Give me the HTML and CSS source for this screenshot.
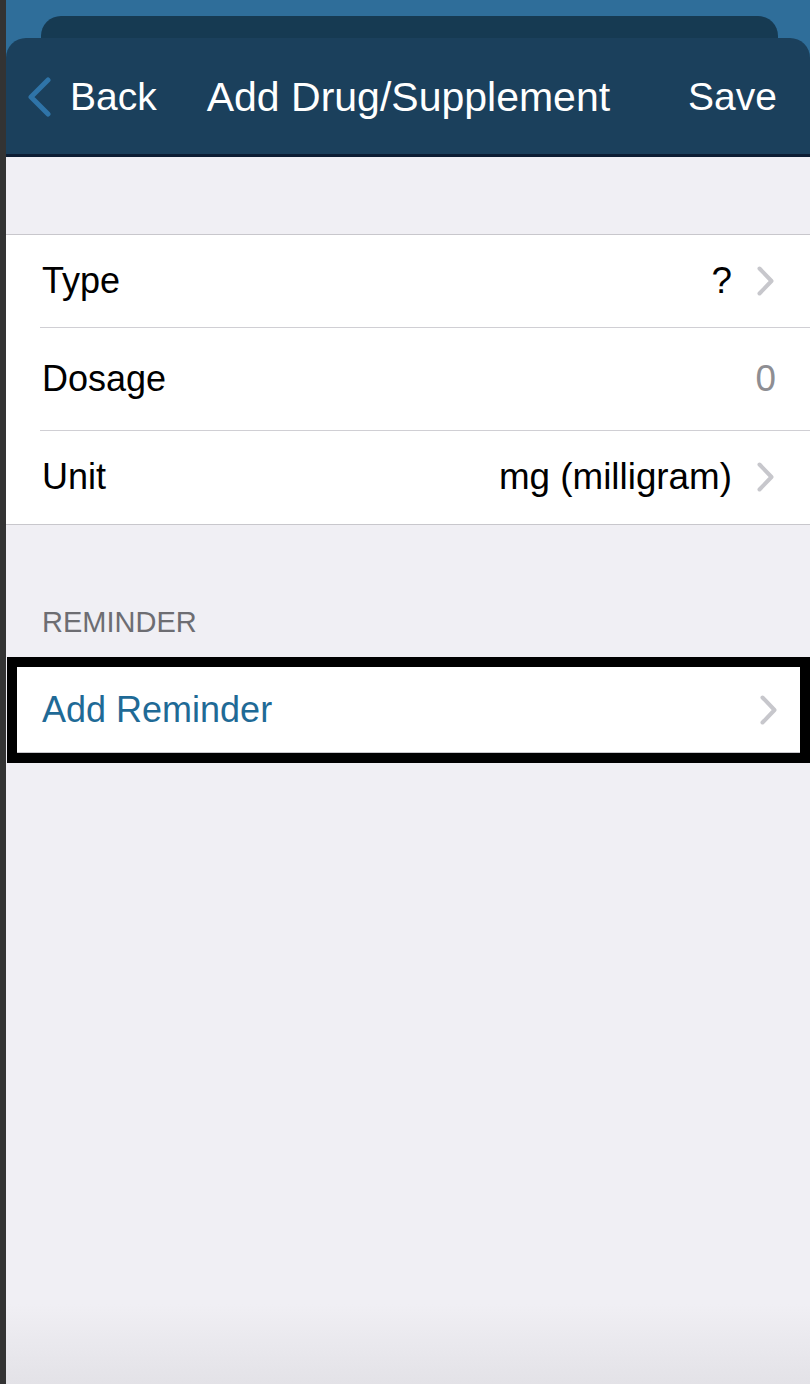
FILE: index.html
```html
<!DOCTYPE html>
<html lang="en">
<head>
  <meta charset="UTF-8" />
  <meta name="viewport" content="width=device-width, initial-scale=1.0" />
  <title>Add Drug/Supplement</title>
  <link rel="stylesheet" href="styles.css">
</head>
<body>
  <div class="edge"></div>
  <div class="screen">
    <header class="header">
      <div class="back-sheet"></div>
      <nav class="navbar">
        <a class="nav-back">
          <svg class="back-icon" width="26" height="40" viewBox="0 0 26 40">
            <polyline points="22,3 5,20 22,37" fill="none" stroke="#2f74a8" stroke-width="5" stroke-linecap="round" stroke-linejoin="round"/>
          </svg>
          <span>Back</span>
        </a>
        <span class="nav-title">Add Drug/Supplement</span>
        <a class="nav-save">Save</a>
      </nav>
    </header>

    <section class="group">
      <div class="row">
        <span class="label">Type</span>
        <span class="value">?</span>
        <svg class="chevron" width="17" height="30" viewBox="0 0 17 30">
          <polyline points="2.5,2.5 14.5,15 2.5,27.5" fill="none" stroke="#c7c7cc" stroke-width="4" stroke-linecap="round" stroke-linejoin="round"/>
        </svg>
      </div>
      <div class="row row-tall">
        <span class="label">Dosage</span>
        <span class="value muted">0</span>
      </div>
      <div class="row row-last">
        <span class="label">Unit</span>
        <span class="value">mg (milligram)</span>
        <svg class="chevron" width="17" height="30" viewBox="0 0 17 30">
          <polyline points="2.5,2.5 14.5,15 2.5,27.5" fill="none" stroke="#c7c7cc" stroke-width="4" stroke-linecap="round" stroke-linejoin="round"/>
        </svg>
      </div>
    </section>

    <div class="section-title">REMINDER</div>

    <section class="highlight">
      <div class="row row-link">
        <span class="label link">Add Reminder</span>
        <svg class="chevron" width="17" height="30" viewBox="0 0 17 30">
          <polyline points="2.5,2.5 14.5,15 2.5,27.5" fill="none" stroke="#c7c7cc" stroke-width="4" stroke-linecap="round" stroke-linejoin="round"/>
        </svg>
      </div>
    </section>

    <div class="filler"></div>
  </div>
</body>
</html>
```

FILE: styles.css
```css
html, body {
  height: 100%;
}
body {
  margin: 0;
  display: flex;
  font-family: 'Liberation Sans', Arial, sans-serif;
  background: #f0eff4;
  color: #000;
}
.edge {
  width: 6px;
  flex-shrink: 0;
  background: #333333;
}
.screen {
  flex: 1;
  display: flex;
  flex-direction: column;
  min-height: 100%;
}

/* top bar */
.header {
  background: #2f6e9a;
  padding-top: 16px;
}
.back-sheet {
  height: 22px;
  margin: 0 32px 0 35px;
  background: #163a52;
  border-radius: 20px 20px 0 0;
}
.navbar {
  height: 114px;
  display: flex;
  align-items: center;
  padding: 2px 33px 0 20px;
  background: #1b405c;
  border-radius: 20px 20px 0 0;
  border-bottom: 3px solid #0d1d33;
  color: #fff;
  font-size: 41px;
}
.nav-back {
  display: flex;
  align-items: center;
  gap: 18px;
  font-size: 39px;
}
.nav-title {
  margin-left: 50px;
}
.nav-save {
  margin-left: auto;
  font-size: 39px;
}

/* table rows */
.group {
  margin-top: 77px;
  background: #fff;
  border-top: 1px solid #c8c7cc;
  border-bottom: 1px solid #c8c7cc;
}
.row {
  display: flex;
  align-items: center;
  height: 92px;
  padding: 0 36px 0 36px;
  font-size: 36px;
}
.group .row:not(:first-child) {
  background: linear-gradient(#d0cfd4, #d0cfd4) no-repeat 34px 0 / 100% 1px;
}
.row-tall {
  height: 103px;
}
.row-last {
  height: 94px;
}
.row .value {
  margin-left: auto;
  font-size: 36.8px;
}
.row .chevron {
  margin-left: 25px;
}
.muted {
  color: #8e8e93;
  margin-right: -2px;
}

.section-title {
  padding: 80px 36px 18px;
  line-height: 34px;
  font-size: 29px;
  color: #6d6d72;
}

.highlight {
  margin-left: 1px;
  border: 10px solid #000;
  background: #fff;
}
.row-link {
  height: 85px;
  padding-left: 25px;
  padding-right: 23px;
  border-bottom: 1px solid #c8c7cc;
}
.row-link .chevron {
  margin-left: auto;
}
.link {
  color: #1f6a96;
}

.filler {
  flex: 1;
  background: linear-gradient(#f0eff4 0, #f0eff4 calc(100% - 80px), #e3e2e7 100%);
}
```
